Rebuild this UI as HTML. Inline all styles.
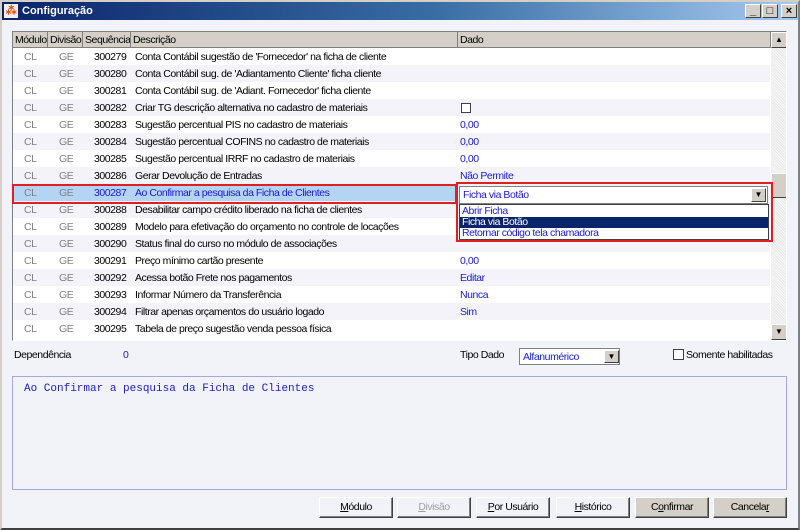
<!DOCTYPE html>
<html><head><meta charset="utf-8"><style>
*{margin:0;padding:0;box-sizing:border-box}
body{width:800px;height:530px;overflow:hidden;background:#f2f3f9;font-family:"Liberation Sans",sans-serif;font-size:10.5px;letter-spacing:-0.45px;color:#000;position:relative}
.a{position:absolute}
.frame{left:0;top:0;width:800px;height:530px;border:2px solid #d4d0c8;border-right-color:#808080;border-bottom-color:#404040}
.title{left:2px;top:2px;width:796px;height:18px;background:linear-gradient(90deg,#0a246a 0%,#3a6ea5 55%,#a6caf0 100%);color:#fff;font-weight:bold;font-size:11px;letter-spacing:0;line-height:18px;padding-left:20px}
.tb{top:4px;width:16px;height:14px;background:#d4d0c8;border:1px solid;border-color:#fff #404040 #404040 #fff;font-size:11px;line-height:12px;text-align:center;font-weight:bold;color:#000;letter-spacing:0}
.grid{left:12px;top:31px;width:775px;height:310px;border:1px solid #808080;border-right-color:#fff;border-bottom-color:#fff;background:#fff;overflow:hidden}
.hd{top:0;height:16px;background:#d4d0c8;border-right:1px solid #808080;border-bottom:1px solid #808080;line-height:16px;padding-left:2px;white-space:nowrap;overflow:hidden}
.row{left:0;width:757px;height:17px;line-height:19px}
.row span{position:absolute;white-space:nowrap}
.c1{left:11px;color:#808080}.c2{left:46px;color:#808080}.c3{left:81px}.c4{left:122px}.c5{left:447px;color:#1a1ad0}
.btn{top:497px;height:21px;width:74px;background:#f2f3f9;border:1px solid;border-color:#fff #404040 #404040 #fff;box-shadow:inset -1px -1px #808080;text-align:center;line-height:19px}
.u{text-decoration:underline}
</style></head><body>
<div class="a frame"></div>
<div class="a title">Configuração</div>
<div class="a" style="left:4px;top:4px;width:14px;height:14px;background:#f0f0f0;color:#e05010;font-size:11px;line-height:14px;text-align:center;font-weight:bold">⁂</div>
<div class="a tb" style="left:745px">_</div>
<div class="a tb" style="left:762px">□</div>
<div class="a tb" style="left:781px">×</div>

<div class="a grid">
<div class="a hd" style="left:0;width:35px">Módulo</div>
<div class="a hd" style="left:35px;width:35px">Divisão</div>
<div class="a hd" style="left:70px;width:48px">Sequência</div>
<div class="a hd" style="left:118px;width:327px">Descrição</div>
<div class="a hd" style="left:445px;width:313px">Dado</div>
<div id="rows"></div>
<div class="a" style="left:758px;top:0;width:16px;height:308px;background:repeating-linear-gradient(45deg,#e8e8e8 0 1px,#f8f8f8 1px 2px)"></div>
<div class="a tb" style="left:758px;top:0;width:16px;height:16px;font-size:8px;line-height:14px">▲</div>
<div class="a tb" style="left:758px;top:141px;width:16px;height:25px"></div>
<div class="a tb" style="left:758px;top:292px;width:16px;height:16px;font-size:8px;line-height:14px">▼</div>
</div>

<div class="a" style="left:12px;top:184px;width:445px;height:20px;border:2px solid #e02020"></div>
<div class="a" style="left:456px;top:182px;width:317px;height:60px;border:2px solid #e02020;background:#f2f3f9"></div>
<div class="a" style="left:459px;top:186px;width:309px;height:18px;background:#fff;border:1px solid #808080;color:#1a1ad0;line-height:17px;padding-left:3px">Ficha via Botão</div>
<div class="a tb" style="left:751px;top:188px;width:15px;height:14px;font-size:8px;line-height:12px">▼</div>
<div class="a" style="left:459px;top:204px;width:310px;height:36px;background:#fff;border:1px solid #404040;color:#1a1ad0;line-height:11px;padding-top:1px">
<div style="padding-left:2px;height:11px">Abrir Ficha</div>
<div style="padding-left:2px;height:11px;background:#0a246a;color:#fff">Ficha via Botão</div>
<div style="padding-left:2px;height:11px">Retornar código tela chamadora</div>
</div>

<div class="a" style="left:14px;top:349px">Dependência</div>
<div class="a" style="left:123px;top:349px;color:#1a1ad0">0</div>
<div class="a" style="left:460px;top:349px">Tipo Dado</div>
<div class="a" style="left:519px;top:348px;width:101px;height:17px;background:#fff;border:1px solid #808080;color:#1a1ad0;line-height:16px;padding-left:3px">Alfanumérico</div>
<div class="a tb" style="left:604px;top:350px;width:15px;height:13px;font-size:8px;line-height:11px">▼</div>
<div class="a" style="left:673px;top:349px;width:11px;height:11px;border:1px solid #404040;background:#fff"></div>
<div class="a" style="left:686px;top:349px">Somente habilitadas</div>

<div class="a" style="left:12px;top:376px;width:775px;height:114px;border:1px solid #a8a8d8;background:#f2f3f9"></div>
<div class="a" style="left:24px;top:383px;font-family:'Liberation Mono',monospace;font-size:11px;letter-spacing:0;color:#2020c0">Ao Confirmar a pesquisa da Ficha de Clientes</div>

<div class="a btn" style="left:319px"><span class="u">M</span>ódulo</div>
<div class="a btn" style="left:397px;color:#a0a0a0"><span class="u">D</span>ivisão</div>
<div class="a btn" style="left:476px"><span class="u">P</span>or Usuário</div>
<div class="a btn" style="left:556px"><span class="u">H</span>istórico</div>
<div class="a btn" style="left:635px;background:#d4d0c8">C<span class="u">o</span>nfirmar</div>
<div class="a btn" style="left:713px;background:#d4d0c8">Cancela<span class="u">r</span></div>

<script>
var d=[["300279","Conta Contábil sugestão de 'Fornecedor' na ficha de cliente",""],
["300280","Conta Contábil sug. de 'Adiantamento Cliente' ficha cliente",""],
["300281","Conta Contábil sug. de 'Adiant. Fornecedor' ficha cliente",""],
["300282","Criar TG descrição alternativa no cadastro de materiais","CB"],
["300283","Sugestão percentual PIS no cadastro de materiais","0,00"],
["300284","Sugestão percentual COFINS no cadastro de materiais","0,00"],
["300285","Sugestão percentual IRRF no cadastro de materiais","0,00"],
["300286","Gerar Devolução de Entradas","Não Permite"],
["300287","Ao Confirmar a pesquisa da Ficha de Clientes",""],
["300288","Desabilitar campo crédito liberado na ficha de clientes",""],
["300289","Modelo para efetivação do orçamento no controle de locações",""],
["300290","Status final do curso no módulo de associações",""],
["300291","Preço mínimo cartão presente","0,00"],
["300292","Acessa botão Frete nos pagamentos","Editar"],
["300293","Informar Número da Transferência","Nunca"],
["300294","Filtrar apenas orçamentos do usuário logado","Sim"],
["300295","Tabela de preço sugestão venda pessoa física",""]];
var h="";
d.forEach(function(r,i){
var bg=i==8?"#b4d4f4":(i%2?"#f3f3f9":"#fff");
var dd=r[2]=="CB"?'<span style="left:448px;top:4px;width:10px;height:10px;border:1px solid #404040;background:#fff"></span>':'<span class="c5">'+r[2]+'</span>';
h+='<div class="a row" style="top:'+(16+17*i)+'px;background:'+bg+'"><span class="c1">CL</span><span class="c2">GE</span><span class="c3"'+(i==8?' style="color:#1a1ad0"':'')+'>'+r[0]+'</span><span class="c4"'+(i==8?' style="color:#1a1ad0"':'')+'>'+r[1]+'</span>'+dd+'</div>';
});
document.getElementById("rows").innerHTML=h;
</script>
</body></html>
